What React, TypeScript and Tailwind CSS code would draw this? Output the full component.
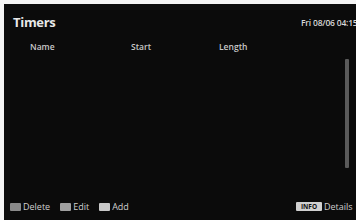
import React from "react";

export default function App() {
  return (
    <div
      className="w-[356px] h-[220px] bg-[#f4f4f4] pl-[4px] pt-[4px] overflow-hidden"
      style={{ fontFamily: '"Open Sans", "Liberation Sans", sans-serif' }}
    >
      <div className="w-[352px] h-[216px] bg-[#0b0b0b] flex flex-col overflow-hidden">
        <div className="h-[34px] flex items-center whitespace-nowrap pt-[3px]">
          <span className="w-[297px] shrink-0 pl-[9px] text-[13px] font-bold text-[#e8e8e8] tracking-[-0.3px]">Timers</span>
          <span className="text-[8.5px] font-semibold text-[#d8d8d8] pt-[2px] tracking-[-0.2px]">Fri 08/06 04:15</span>
        </div>
        <div className="h-[18px] flex items-center text-[8.5px] font-semibold text-[#c8c8c8] whitespace-nowrap">
          <span className="ml-[26px] w-[101px]">Name</span>
          <span className="w-[88px]">Start</span>
          <span>Length</span>
        </div>
        <div className="flex-1 flex justify-end pr-[7px] pt-[3px] pb-[18px]">
          <div className="w-[4px] bg-[#5a5a5a] rounded-[1px] self-stretch" />
        </div>
        <div className="h-[34px] flex items-center text-[9px] text-[#cfcfcf] whitespace-nowrap pt-[7px]">
          <div className="w-[292px] shrink-0 flex items-center pl-[6px]">
            <span className="w-[11px] h-[8px] bg-[#8a8a8a] rounded-[1px] mr-[2px]" />
            <span className="mr-[10px]">Delete</span>
            <span className="w-[11px] h-[8px] bg-[#a0a0a0] rounded-[1px] mr-[2px]" />
            <span className="mr-[10px]">Edit</span>
            <span className="w-[11px] h-[8px] bg-[#c8c8c8] rounded-[1px] mr-[2px]" />
            <span>Add</span>
          </div>
          <div className="flex items-center">
            <span className="bg-[#d0d0d0] text-[#111] text-[6.5px] font-bold w-[26px] text-center h-[9px] leading-[9px] rounded-[1px] mr-[2px]">INFO</span>
            <span>Details</span>
          </div>
        </div>
      </div>
    </div>
  );
}
